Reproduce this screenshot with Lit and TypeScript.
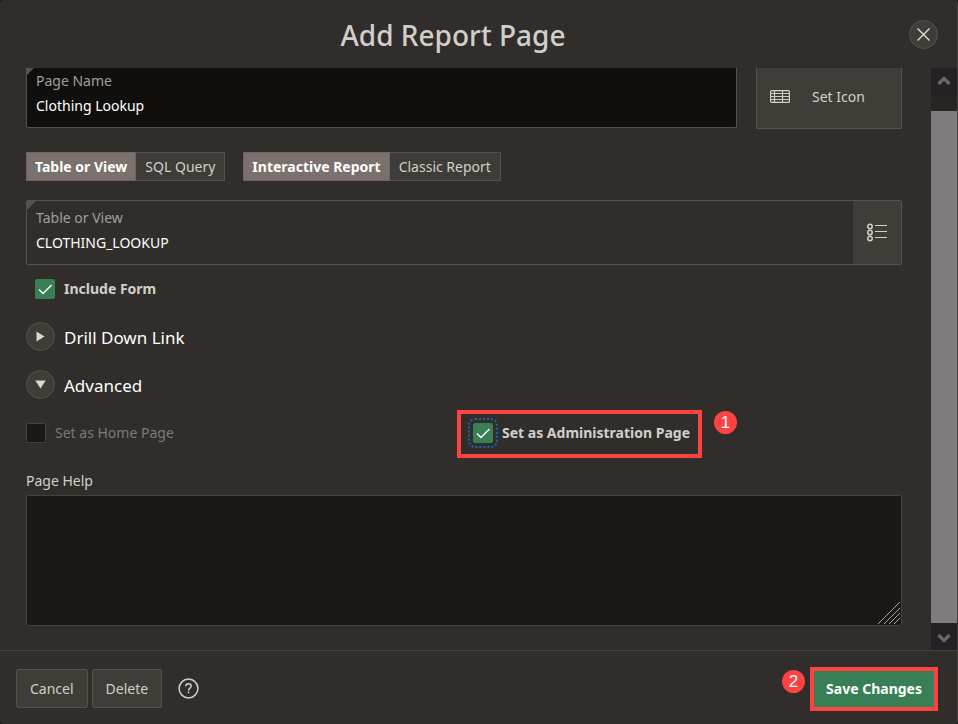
import { LitElement, html, css, svg } from "lit";
import { customElement, property } from "lit/decorators.js";

const tick = html`<svg class="tick" viewBox="0 0 20 20" aria-hidden="true">
  <path d="M4 10.5 8 14.5 16.5 6" fill="none" stroke="#fff" stroke-width="1.4" />
</svg>`;

@customElement("segment-group")
class SegmentGroup extends LitElement {
  @property() name = "";
  @property() legend = "";
  @property({ type: Array }) options: string[] = [];

  static styles = css`
    :host { display: block; }
    .group { display: flex; margin: 0; padding: 0; border: 0; }
    .item {
      position: relative;
      box-sizing: border-box;
      height: 29px;
      padding: 0 9px;
      border: 1px solid #55524b;
      background: #3f3b36;
      color: #d2cfcb;
      font-size: 14px;
      line-height: 28px;
      white-space: nowrap;
    }
    .item + .item { border-left: 0; }
    .item:has(:checked) {
      padding: 0 8px;
      background: #7a716d;
      border-color: #6b6460;
      color: #fff;
      font-weight: 700;
    }
    .radio { position: absolute; inset: 0; margin: 0; width: 100%; height: 100%; opacity: 0; }
  `;

  render() {
    return html`<fieldset class="group" aria-label=${this.legend}>
      ${this.options.map(
        (o, i) => html`<label class="item"><input class="radio" type="radio" name=${this.name} ?checked=${i === 0} />${o}</label>`
      )}
    </fieldset>`;
  }
}

@customElement("app-root")
class AppRoot extends LitElement {
  static styles = css`
    :host {
      display: block;
      background: #14171b;
      font-family: "Noto Sans", "Open Sans", sans-serif;
      font-size: 14px;
      line-height: 20px;
      color: #d2cfcb;
    }
    * { box-sizing: border-box; }
    button, input, textarea { font: inherit; color: inherit; }
    .dialog {
      display: flex;
      flex-direction: column;
      min-height: 100vh;
      background: #312d2a;
      border-right: 1px solid #45413d;
      border-radius: 4px;
      overflow: hidden;
    }
    .head {
      display: grid;
      grid-template-columns: 1fr auto 1fr;
      align-items: center;
      height: 68px;
      padding: 4px 19px 4px 0;
    }
    .title {
      grid-column: 2;
      margin: 0 32px 0 0;
      padding-top: 2px;
      font-size: 28px;
      line-height: 36px;
      font-weight: 500;
    }
    .round {
      display: grid;
      place-items: center;
      flex: none;
      width: 29px;
      height: 29px;
      padding: 0;
      border: 1px solid #55524b;
      border-radius: 50%;
      background: #403c37;
    }
    .close { justify-self: end; }
    .body { display: flex; flex: 1; }
    .content { flex: 1; min-width: 0; padding: 0 29px 24px 26px; }
    .bar {
      display: flex;
      flex-direction: column;
      width: 26px;
      background: #262523;
    }
    .arrow { display: grid; place-items: center; height: 27px; background: #232123; }
    .thumb { flex: 1; margin-top: 16px; background: #7f7c7d; }

    .name-row { display: flex; gap: 19px; }
    .field {
      position: relative;
      display: flex;
      flex: 1;
      border: 1px solid #55524e;
      border-radius: 2px;
    }
    .field::before {
      content: "";
      position: absolute;
      left: 0;
      top: 0;
      width: 9px;
      height: 9px;
      background: #55524e;
      clip-path: polygon(0 0, 100% 0, 0 100%);
    }
    .stack { display: flex; flex: 1; flex-direction: column; gap: 3px; padding: 7px 9px 0; }
    .caption { color: #a19e9a; line-height: 20px; }
    .text {
      width: 100%;
      height: 22px;
      padding: 0;
      border: 0;
      outline: 0;
      background: none;
      color: #fff;
    }
    .dark { height: 60px; background: #100f0d; border-top: 0; border-radius: 0 0 2px 2px; }
    .dark::before { width: 7px; height: 7px; }
    .dark .stack { padding-top: 3px; }
    .table-field { height: 65px; margin-top: 19px; }
    .icon-btn {
      display: flex;
      align-items: center;
      gap: 22px;
      width: 146px;
      height: 61px;
      padding: 0 13px 3px;
      border: 1px solid #55524b;
      border-top: 0;
      border-radius: 0 0 2px 2px;
      background: #403c37;
    }
    .list-btn {
      display: grid;
      place-items: center;
      width: 48px;
      padding: 0;
      border: 0;
      background: #403c37;
    }
    .segments { display: flex; gap: 18px; margin-top: 23px; }

    .check { display: inline-flex; align-items: center; gap: 9px; font-weight: 700; }
    .box { display: grid; width: 20px; height: 20px; }
    .input {
      grid-area: 1 / 1;
      appearance: none;
      width: 20px;
      height: 20px;
      margin: 0;
      border: 1px solid #45423e;
      border-radius: 2px;
      background: #191816;
    }
    .input:checked { background: #387f55; border-color: #387f55; }
    .tick { grid-area: 1 / 1; width: 20px; height: 20px; pointer-events: none; }
    .include { display: flex; margin: 14px 0 0 9px; }
    .section { display: flex; align-items: center; gap: 9px; margin-top: 19px; color: #fff; }
    .section-title { margin: 0; padding-top: 2px; font-size: 17px; line-height: 26px; font-weight: 400; }
    .drill { margin-top: 23px; }
    .pages { display: grid; grid-template-columns: 1fr 1fr; margin-top: 24px; }
    .muted { font-weight: 400; color: #7d7975; }
    .admin { position: relative; justify-self: start; padding-left: 9px; }
    .admin .input { outline: 2px dotted #1a64ac; outline-offset: 3px; }
    .admin::before {
      content: "";
      position: absolute;
      inset: -13px -12px -15px -7px;
      border: 4px solid #fe4242;
      pointer-events: none;
    }
    .badge {
      display: grid;
      place-items: center;
      width: 23px;
      height: 23px;
      border-radius: 50%;
      background: #fe4242;
      color: #fff;
      font-family: "Liberation Sans", Arial, sans-serif;
      font-size: 17px;
      line-height: 23px;
      font-weight: 400;
    }
    .admin .badge { position: absolute; left: calc(100% + 24px); top: -12px; }
    .help-label { display: block; margin: 28px 0 4px; }
    .area-wrap { position: relative; display: flex; }
    .area {
      width: 100%;
      height: 131px;
      padding: 8px;
      border: 1px solid #45423e;
      border-radius: 2px;
      background: #191816;
      resize: none;
      outline: 0;
    }
    .grip { position: absolute; right: 2px; bottom: 2px; pointer-events: none; }

    .foot {
      display: flex;
      align-items: center;
      gap: 4px;
      height: 74px;
      padding: 2px 19px 0 16px;
      border-top: 1px solid #45413d;
    }
    .btn {
      height: 39px;
      padding: 0 13px;
      border: 1px solid #55524b;
      border-radius: 2px;
      background: #403c37;
    }
    .help { display: grid; margin-left: 12px; padding: 0; border: 0; background: none; }
    .foot .badge { margin: 0 1px 15px auto; }
    .save {
      height: 44px;
      padding: 0 12px;
      border: 4px solid #fe4242;
      background: #387f55;
      color: #fff;
      font-weight: 700;
    }
  `;

  render() {
    return html`<div class="dialog" role="dialog" aria-labelledby="title">
      <header class="head">
        <h1 class="title" id="title">Add Report Page</h1>
        <button class="round close" aria-label="Close">
          <svg width="15" height="15" viewBox="0 0 15 15"><path d="M1.5 1.5l12 12M13.5 1.5l-12 12" stroke="#e0deda" stroke-width="1.4" /></svg>
        </button>
      </header>

      <div class="body">
        <main class="content">
          <div class="name-row">
            <div class="field dark">
              <div class="stack">
                <label class="caption" for="name">Page Name</label>
                <input class="text" id="name" value="Clothing Lookup" />
              </div>
            </div>
            <button class="icon-btn">
              <svg width="20" height="13" viewBox="0 0 20 13" fill="none" stroke="#d2cfcb" stroke-width="1.2">
                <rect x=".6" y=".6" width="18.8" height="11.8" rx="1" />
                <path d="M4.5 .5v12M12.5 .5v12M.5 3.5h19M.5 6.5h19M.5 9.5h19" />
              </svg>
              <span>Set Icon</span>
            </button>
          </div>

          <div class="segments">
            <segment-group name="source" legend="Source" .options=${["Table or View", "SQL Query"]}></segment-group>
            <segment-group name="kind" legend="Report type" .options=${["Interactive Report", "Classic Report"]}></segment-group>
          </div>

          <div class="field table-field">
            <div class="stack">
              <label class="caption" for="table">Table or View</label>
              <input class="text" id="table" value="CLOTHING_LOOKUP" />
            </div>
            <button class="list-btn" aria-label="Choose table">
              <svg width="20" height="19" viewBox="0 0 20 19" fill="none" stroke="#d2cfcb">
                ${[3, 9, 15].map((y) => svg`<circle cx="3" cy=${y + 0.5} r="2.2" stroke-width="1.5" /><path d="M8 ${y - 0.5}h12" stroke-width="1.2" />`)}
              </svg>
            </button>
          </div>

          <label class="check include">
            <span class="box"><input class="input" type="checkbox" checked />${tick}</span>Include Form
          </label>

          <div class="section drill">
            <button class="round" aria-label="Expand Drill Down Link" aria-expanded="false">
              <svg width="11" height="11" viewBox="0 0 11 11"><path d="M1.5 .5v10l8-5z" fill="#d9d7d3" /></svg>
            </button>
            <h2 class="section-title">Drill Down Link</h2>
          </div>
          <div class="section">
            <button class="round" aria-label="Collapse Advanced" aria-expanded="true">
              <svg width="11" height="11" viewBox="0 0 11 11"><path d="M.3 1.5h10.4l-5.2 8z" fill="#d9d7d3" /></svg>
            </button>
            <h2 class="section-title">Advanced</h2>
          </div>

          <div class="pages">
            <label class="check muted">
              <span class="box"><input class="input" type="checkbox" disabled /></span>Set as Home Page
            </label>
            <label class="check admin">
              <span class="box"><input class="input" type="checkbox" checked />${tick}</span>Set as Administration Page
              <span class="badge">1</span>
            </label>
          </div>

          <label class="help-label" for="help">Page Help</label>
          <div class="area-wrap">
            <textarea class="area" id="help"></textarea>
            <svg class="grip" width="22" height="22" viewBox="0 0 22 22" stroke="#a8a6a3" stroke-width="1">
              <path d="M0 22L22 0M6 22L22 6M11 22L22 11M16 22L22 16" />
            </svg>
          </div>
        </main>

        <div class="bar" aria-hidden="true">
          <div class="arrow">
            <svg width="14" height="12" viewBox="0 0 14 12"><path d="M1.5 8L7 2.5 12.5 8" fill="none" stroke="#696768" stroke-width="3.2" /></svg>
          </div>
          <div class="thumb"></div>
          <div class="arrow">
            <svg width="14" height="12" viewBox="0 0 14 12"><path d="M1.5 4L7 9.5 12.5 4" fill="none" stroke="#696768" stroke-width="3.2" /></svg>
          </div>
        </div>
      </div>

      <footer class="foot">
        <button class="btn">Cancel</button>
        <button class="btn">Delete</button>
        <button class="help" aria-label="Help">
          <svg width="21" height="21" viewBox="0 0 21 21" fill="none" stroke="#d2cfcb" stroke-width="1.5">
            <circle cx="10.5" cy="10.5" r="9.4" />
            <path d="M7.8 8.3c0-1.7 1.2-2.6 2.7-2.6s2.7 1 2.7 2.4c0 2-2.7 2.1-2.7 4.3" />
            <path d="M10.5 13.6v1.7" />
          </svg>
        </button>
        <span class="badge">2</span>
        <button class="save">Save Changes</button>
      </footer>
    </div>`;
  }
}
